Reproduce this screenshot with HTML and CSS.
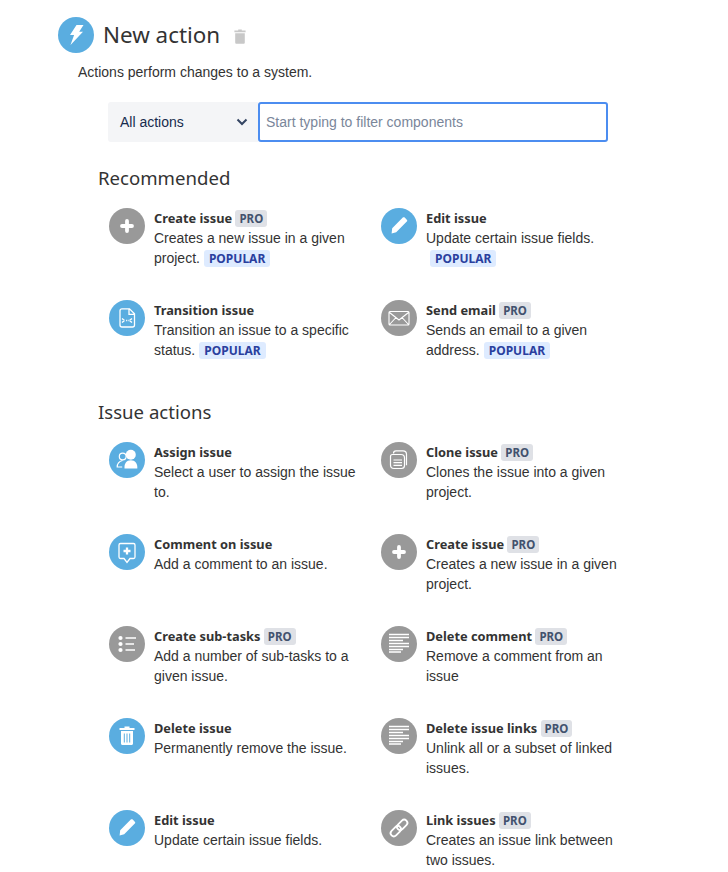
FILE: index.html
```html
<!DOCTYPE html>
<html lang="en">
<head>
<meta charset="utf-8">
<title>New action</title>
<link rel="stylesheet" href="styles.css">
</head>
<body>
<main class="page">
  <header class="head">
    <span class="icon icon-blue"><svg viewBox="0 0 36 36"><path d="M18.500 8h7l-4.300 6.800h3.800L12.500 28l3.600-10H12z" fill="#fff"/></svg></span>
    <h1 class="title">New action</h1>
    <svg class="trash" viewBox="0 0 12 15"><path d="M4.200 1.500V.4h3.600v1.100h3.800v1.800H.4V1.500zM1.200 4.200h9.600v9.300c0 .8-.5 1.300-1.300 1.300h-7c-.8 0-1.300-.5-1.300-1.300z" fill="#c8c8c8"/></svg>
  </header>
  <p class="lead">Actions perform changes to a system.</p>
  <div class="filter">
    <div class="select"><span>All actions</span><svg viewBox="0 0 12 8"><path d="M1.500 1.500 6 6l4.500-4.500" fill="none" stroke="#344563" stroke-width="2"/></svg></div>
    <div class="search">Start typing to filter components</div>
  </div>

  <h2 class="section first">Recommended</h2>
  <div class="grid">
    <div class="item"><span class="icon icon-grey"><svg viewBox="0 0 36 36"><path d="M18 13v10M13 18h10" stroke="#fff" stroke-width="3.800" stroke-linecap="round"/></svg></span><div class="body"><div class="name">Create issue <span class="pro">PRO</span></div><div class="desc">Creates a new issue in a given project.<span class="pop">POPULAR</span></div></div></div>
    <div class="item"><span class="icon icon-blue"><svg viewBox="0 0 36 36"><path d="M21.800 9.600c.6-.6 1.300-.6 1.900 0l2.100 2.100c.6.6.6 1.300 0 1.900L15.200 24.200l-4.600 1.200 .6-5.200z" fill="#fff"/></svg></span><div class="body"><div class="name">Edit issue</div><div class="desc">Update certain issue fields.<span class="pop">POPULAR</span></div></div></div>
    <div class="item"><span class="icon icon-blue"><svg viewBox="0 0 36 36"><path d="M13 8.800h7.500l5 5V25c0 1.200-.8 2-2 2H13c-1.200 0-2-.8-2-2V10.800c0-1.200.8-2 2-2zM20 8.800V14.300h5.500" fill="none" stroke="#fff" stroke-width="1.300"/><path d="M15.500 20.500l-2.500-2M15.500 20.500l-2.500 2M20.500 20.500l2.500-2M20.500 20.500l2.500 2M17 20.500h.9M18.700 20.500h.9" fill="none" stroke="#fff" stroke-width="1.400"/></svg></span><div class="body"><div class="name">Transition issue</div><div class="desc">Transition an issue to a specific status.<span class="pop">POPULAR</span></div></div></div>
    <div class="item"><span class="icon icon-grey"><svg viewBox="0 0 36 36"><path d="M9 11.500h18c.5 0 1 .5 1 1v11.500c0 .5-.5 1-1 1H9c-.5 0-1-.5-1-1V12.500c0-.5.500-1 1-1zM8.500 12.500 18 20l9.500-7.500M8.500 24.500l6.500-7M27.500 24.500l-6.500-7" fill="none" stroke="#fff" stroke-width="1.100"/></svg></span><div class="body"><div class="name">Send email <span class="pro">PRO</span></div><div class="desc">Sends an email to a given address.<span class="pop">POPULAR</span></div></div></div>
  </div>

  <h2 class="section">Issue actions</h2>
  <div class="grid">
    <div class="item"><span class="icon icon-blue"><svg viewBox="0 0 36 36"><circle cx="21.800" cy="12.700" r="5" fill="#fff"/><path d="M15.500 26.500c-.4-5 2-8.200 6.300-8.200s6.900 3.200 6.500 8.200z" fill="#fff"/><circle cx="13.700" cy="14.500" r="3.400" fill="none" stroke="#fff" stroke-width="1.200"/><path d="M13.500 18.500c-3 .8-5.300 3-5.300 6.500h5" fill="none" stroke="#fff" stroke-width="1.200"/></svg></span><div class="body"><div class="name">Assign issue</div><div class="desc">Select a user to assign the issue to.</div></div></div>
    <div class="item"><span class="icon icon-grey"><svg viewBox="0 0 36 36"><path d="M15 8.800h7c2 0 3.500 1.500 3.500 3.500v11M12.500 11.500c0-1.500 1-2.700 2.500-2.700M11.500 12.500h8.500c2 0 3.500 1.500 3.500 3.500v7.500c0 1.800-1.200 3-3 3h-7.500c-2.100 0-3.500-1.400-3.500-3.500v-8.500c0-1.200.9-2 2-2zM12.500 18h8.500M12.500 20.700h8.500M12.500 23.400h8.500" fill="none" stroke="#fff" stroke-width="1.200"/></svg></span><div class="body"><div class="name">Clone issue <span class="pro">PRO</span></div><div class="desc">Clones the issue into a given project.</div></div></div>
    <div class="item"><span class="icon icon-blue"><svg viewBox="0 0 36 36"><path d="M11.500 9.500h13c1 0 1.500.6 1.500 1.500v12c0 1-.5 1.500-1.500 1.500h-3.500L18 28.500l-3-4h-3.500c-1 0-1.500-.5-1.500-1.500V11c0-.9.500-1.500 1.500-1.500z" fill="none" stroke="#fff" stroke-width="1.300"/><path d="M18 13.500v7M14.500 17h7" stroke="#fff" stroke-width="2.300"/></svg></span><div class="body"><div class="name">Comment on issue</div><div class="desc">Add a comment to an issue.</div></div></div>
    <div class="item"><span class="icon icon-grey"><svg viewBox="0 0 36 36"><path d="M18 13v10M13 18h10" stroke="#fff" stroke-width="3.800" stroke-linecap="round"/></svg></span><div class="body"><div class="name">Create issue <span class="pro">PRO</span></div><div class="desc">Creates a new issue in a given project.</div></div></div>
    <div class="item"><span class="icon icon-grey"><svg viewBox="0 0 36 36"><circle cx="11.500" cy="12" r="2.100" fill="#fff"/><circle cx="11.500" cy="18" r="2.100" fill="#fff"/><circle cx="11.500" cy="24" r="2.100" fill="#fff"/><path d="M16.500 12h10.500M16.500 18h8.500M16.500 24h9.500" stroke="#fff" stroke-width="1.300"/></svg></span><div class="body"><div class="name">Create sub-tasks <span class="pro">PRO</span></div><div class="desc">Add a number of sub-tasks to a given issue.</div></div></div>
    <div class="item"><span class="icon icon-grey"><svg viewBox="0 0 36 36"><path d="M8 8.500h20M8 11.500h20M8 14.500h14M8 17.500h20M8 20.500h20M8 23.500h14M8 26h12" stroke="#fff" stroke-width="1.300"/></svg></span><div class="body"><div class="name">Delete comment <span class="pro">PRO</span></div><div class="desc">Remove a comment from an issue</div></div></div>
    <div class="item"><span class="icon icon-blue"><svg viewBox="0 0 36 36"><path d="M15.500 10V8.500h5V10h5v2h-15v-2zM12 13h12v12.500c0 .9-.6 1.500-1.500 1.500h-9c-.9 0-1.500-.6-1.500-1.500z" fill="#fff"/><path d="M15.300 15.500V24.500M18 15.500V24.500M20.700 15.500V24.500" stroke="#5aade0" stroke-width="1"/></svg></span><div class="body"><div class="name">Delete issue</div><div class="desc">Permanently remove the issue.</div></div></div>
    <div class="item"><span class="icon icon-grey"><svg viewBox="0 0 36 36"><path d="M8 8.500h20M8 11.500h20M8 14.500h14M8 17.500h20M8 20.500h20M8 23.500h14M8 26h12" stroke="#fff" stroke-width="1.300"/></svg></span><div class="body"><div class="name">Delete issue links <span class="pro">PRO</span></div><div class="desc">Unlink all or a subset of linked issues.</div></div></div>
    <div class="item"><span class="icon icon-blue"><svg viewBox="0 0 36 36"><path d="M21.800 9.600c.6-.6 1.300-.6 1.900 0l2.100 2.100c.6.6.6 1.300 0 1.900L15.200 24.200l-4.600 1.200 .6-5.200z" fill="#fff"/></svg></span><div class="body"><div class="name">Edit issue</div><div class="desc">Update certain issue fields.</div></div></div>
    <div class="item"><span class="icon icon-grey"><svg viewBox="0 0 36 36"><g fill="none" stroke="#fff" stroke-width="1.800" transform="rotate(-45 18 18)"><rect x="7.500" y="14.800" width="12" height="6.400" rx="3.200"/><rect x="16.500" y="14.800" width="12" height="6.400" rx="3.200"/></g></svg></span><div class="body"><div class="name">Link issues <span class="pro">PRO</span></div><div class="desc">Creates an issue link between two issues.</div></div></div>
  </div>
</main>
</body>
</html>
```
FILE: styles.css
```css
* { box-sizing: border-box; }
html, body { margin: 0; background: #fff; }
body { font-family: "Liberation Sans", Arial, sans-serif; font-size: 14px; line-height: 20px; color: #333; }
.page { height: 872px; overflow: hidden; padding: 17px 0 0 58px; }
.head { display: flex; align-items: center; height: 36px; }
.icon { flex: none; display: block; width: 36px; height: 36px; border-radius: 50%; }
.icon svg { display: block; width: 36px; height: 36px; }
.icon-blue { background: #5aade0; }
.icon-grey { background: #999; }
.title { margin: 0 0 0 9px; font: 400 22.400px/36px "Noto Sans", sans-serif; color: #333; }
.trash { width: 12px; height: 15px; margin-left: 14px; margin-top: 3px; }
.lead { margin: 9px 0 0 20px; }
.filter { display: flex; margin: 20px 0 0 50px; width: 500px; height: 40px; }
.select { width: 150px; display: flex; align-items: center; justify-content: space-between; padding: 0 10px 0 12px; background: #f4f5f7; border-radius: 3px 0 0 3px; color: #172b4d; }
.select svg { width: 12px; height: 8px; }
.search { flex: 1; display: flex; align-items: center; padding: 0 6px; border: 2px solid #4c8df0; border-radius: 3px; color: #7a869a; }
.section { margin: 0 0 0 40px; padding-top: 14px; font: 400 18.600px/28px "Noto Sans", sans-serif; color: #333; }
.section.first { padding-top: 22px; }
.grid { display: grid; grid-template-columns: 272px 272px; grid-auto-rows: 92px; margin: 8px 0 0 51px; }
.item { display: flex; gap: 9px; padding-top: 8px; }
.body { width: 205px; }
.name { font: 700 12.800px/20px "Noto Sans", sans-serif; color: #333; }
.pro, .pop { display: inline-block; padding: 0 5px; border-radius: 3px; font: 700 12px/17px "Noto Sans", sans-serif; }
.pro { background: #dfe1e6; color: #42526e; padding: 0 4px; font-size: 11.500px; }
.pop { background: #deebff; color: #2a3f9e; margin-left: 4px; }
```
